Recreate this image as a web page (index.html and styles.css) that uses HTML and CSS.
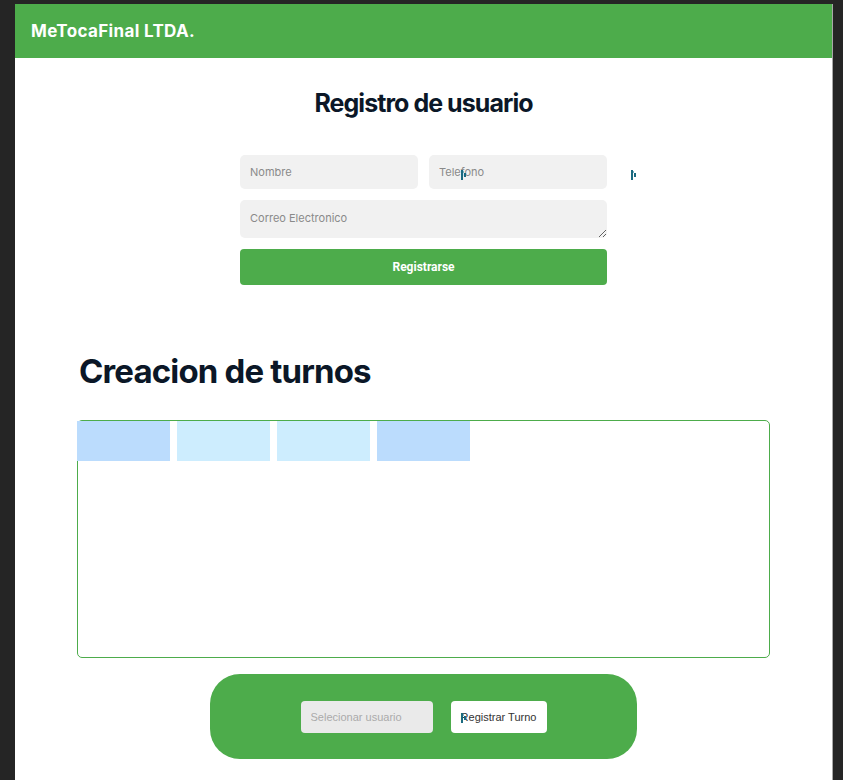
FILE: index.html
```html
<!DOCTYPE html>
<html lang="es">
<head>
<meta charset="utf-8">
<title>MeTocaFinal LTDA.</title>
<link rel="stylesheet" href="styles.css">
</head>
<body>
<div class="page">
  <header class="topbar">
    <span class="brand">MeTocaFinal LTDA.</span>
  </header>

  <section class="registro">
    <h1 class="title">Registro de usuario</h1>
    <form class="reg-form">
      <div class="row">
        <input class="field" type="text" placeholder="Nombre">
        <input class="field" type="text" placeholder="Telefono">
      </div>
      <textarea class="field area" placeholder="Correo Electronico"></textarea>
      <button type="button" class="btn-green">Registrarse</button>
    </form>
  </section>

  <section class="turnos">
    <h2 class="subtitle">Creacion de turnos</h2>
    <div class="calendar">
      <div class="tiles">
        <div class="tile tile-a"></div>
        <div class="tile tile-b"></div>
        <div class="tile tile-b"></div>
        <div class="tile tile-a"></div>
      </div>
    </div>
    <div class="pill">
      <input class="select-user" type="text" placeholder="Selecionar usuario">
      <button type="button" class="btn-white">Registrar Turno</button>
    </div>
  </section>

  <svg class="cursor c1" width="6" height="10" viewBox="0 0 6 10"><rect x="0" y="0" width="2" height="10" fill="#1b6a80"/><rect x="2" y="1" width="1" height="2" fill="#7fb3c2"/><rect x="3" y="3" width="2" height="4" fill="#1b6a80"/></svg>
  <svg class="cursor c2" width="6" height="10" viewBox="0 0 6 10"><rect x="0" y="0" width="2" height="10" fill="#1b6a80"/><rect x="2" y="1" width="1" height="2" fill="#7fb3c2"/><rect x="3" y="3" width="2" height="4" fill="#1b6a80"/></svg>
  <svg class="cursor c3" width="6" height="10" viewBox="0 0 6 10"><rect x="0" y="0" width="2" height="10" fill="#1b6a80"/><rect x="2" y="1" width="1" height="2" fill="#7fb3c2"/><rect x="3" y="3" width="2" height="4" fill="#1b6a80"/></svg>
</div>
</body>
</html>
```

FILE: styles.css
```css
* { box-sizing: border-box; }

html, body {
  margin: 0;
  height: 100%;
}

body {
  background: #252525;
  padding: 4px 10px 0 15px;
  font-family: "Inter", "Liberation Sans", sans-serif;
  overflow: hidden;
}

.page {
  position: relative;
  background: #ffffff;
  min-height: 776px;
  border-right: 1px solid #a8a8a8;
}

.topbar {
  height: 54px;
  background: #4dac4b;
  display: flex;
  align-items: center;
  padding-left: 16px;
}

.brand {
  color: #ffffff;
  font-weight: 700;
  font-size: 17px;
  letter-spacing: 0.35px;
}

.registro {
  display: flex;
  flex-direction: column;
  align-items: center;
}

.title {
  margin: 30px 0 0;
  font-size: 25px;
  line-height: 30px;
  font-weight: 700;
  letter-spacing: -0.95px;
  color: #0b1727;
}

.reg-form {
  margin-top: 37px;
  width: 367px;
  display: flex;
  flex-direction: column;
  gap: 11px;
}

.row {
  display: flex;
  gap: 11px;
}

.field {
  border: none;
  outline: none;
  background: #f1f1f1;
  border-radius: 5px;
  font-family: "Inter", "Liberation Sans", sans-serif;
  font-size: 11px;
  padding: 0 10px;
  color: #333;
}

.field::placeholder { color: #8a8a8a; }

.row .field {
  width: 178px;
  height: 34px;
}

.area {
  height: 38px;
  padding-top: 11px;
  resize: vertical;
  display: block;
}

.btn-green {
  height: 36px;
  border: none;
  border-radius: 4px;
  background: #4dac4b;
  color: #ffffff;
  font-family: "Roboto", "Inter", sans-serif;
  font-weight: 700;
  font-size: 12px;
}

.turnos {
  padding: 0 62px;
}

.subtitle {
  margin: 66px 0 0 2px;
  font-size: 33px;
  line-height: 40px;
  font-weight: 700;
  letter-spacing: -0.85px;
  color: #0b1727;
}

.calendar {
  margin-top: 29px;
  height: 238px;
  border: 1px solid #4dac4b;
  border-radius: 5px;
}

.tiles {
  display: flex;
  gap: 7px;
  margin-left: -1px;
}

.tile {
  width: 93px;
  height: 40px;
}

.tile-a { background: #bbdcfd; }
.tile-b { background: #cdedfe; }

.pill {
  margin: 16px auto 0;
  width: 427px;
  height: 85px;
  border-radius: 30px;
  background: #4dac4b;
  display: flex;
  align-items: center;
  justify-content: center;
  gap: 18px;
}

.select-user {
  width: 132px;
  height: 32px;
  border: none;
  outline: none;
  border-radius: 4px;
  background: #eaeaea;
  padding: 0 10px;
  font-family: "Liberation Sans", Arial, sans-serif;
  font-size: 11px;
}

.select-user::placeholder { color: #aaaaaa; }

.btn-white {
  width: 96px;
  height: 32px;
  border: none;
  border-radius: 4px;
  background: #ffffff;
  color: #333333;
  font-family: "Liberation Sans", Arial, sans-serif;
  font-size: 11px;
  padding: 0;
}

.cursor {
  position: absolute;
}
.c1 { left: 446px; top: 166px; }
.c2 { left: 616px; top: 166px; }
.c3 { left: 446px; top: 709px; }
```
